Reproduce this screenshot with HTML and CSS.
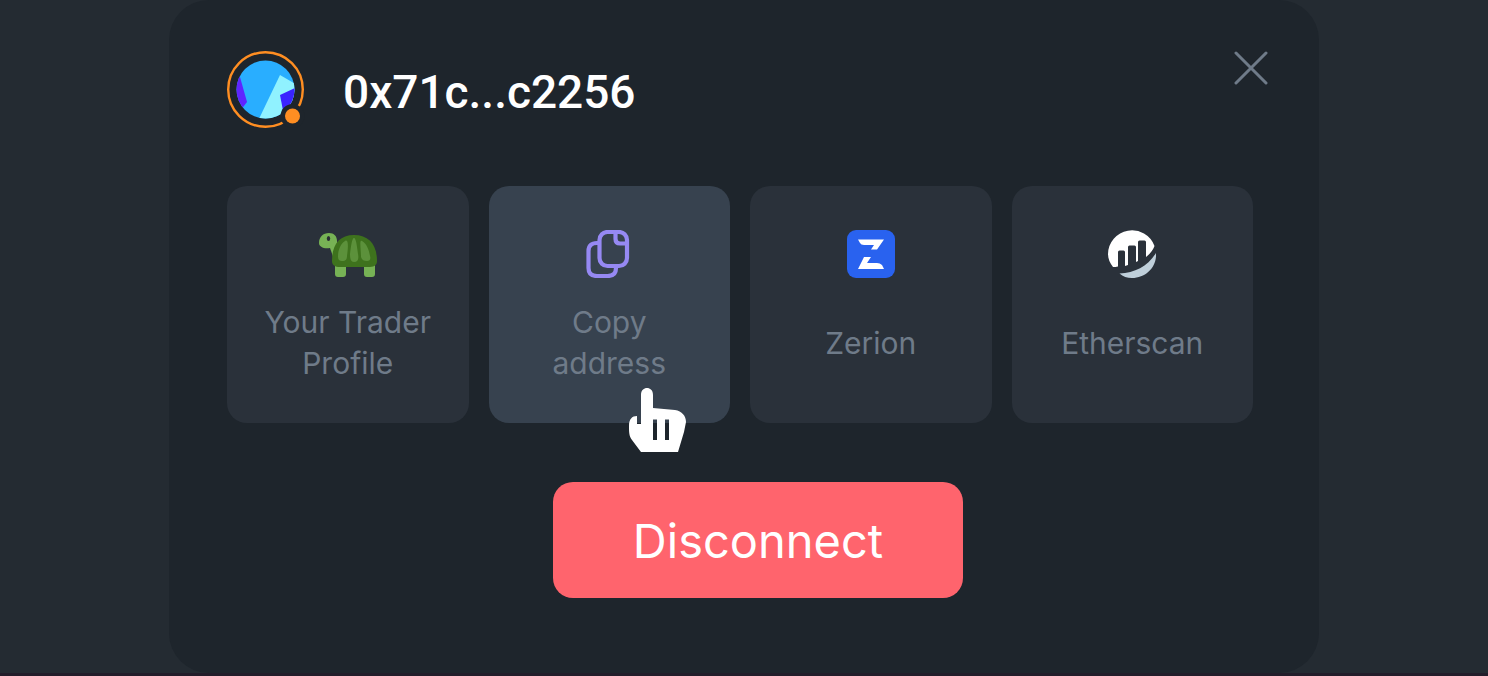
FILE: index.html
```
<!DOCTYPE html>
<html lang="en">
<head>
  <meta charset="UTF-8" />
  <meta name="viewport" content="width=device-width, initial-scale=1" />
  <title>Wallet account</title>
  <link rel="stylesheet" href="styles.css">
</head>
<body>

  <main class="modal" role="dialog" aria-labelledby="address">
    <header class="account">
      <!-- Avatar with status ring -->
      <svg class="avatar" viewBox="0 0 78 78" aria-hidden="true">
        <defs>
          <clipPath id="face"><circle cx="38.5" cy="38.5" r="29" /></clipPath>
        </defs>
        <circle cx="38.5" cy="38.5" r="37.3" fill="none" stroke="#ff8e22" stroke-width="2.4" />
        <g clip-path="url(#face)">
          <rect width="78" height="78" fill="#29aeff" />
          <path d="M8 22 L13 26 L20 51 L13 60 H6 Z" fill="#5f24ff" />
          <path d="M53 24 L72 35 L72 72 H30 Z" fill="#90f2ff" />
          <path d="M53 44 L70 36 V70 H58 Z" fill="#3a24ff" />
        </g>
        <circle cx="65.5" cy="65" r="12" fill="#1e252c" />
        <circle cx="65.5" cy="65" r="7.5" fill="#ff8e22" />
      </svg>
      <h1 class="address" id="address">0x71c...c2256</h1>
      <button class="close" type="button" aria-label="Close">
        <svg viewBox="0 0 34 34" aria-hidden="true">
          <path d="M2 2 L32 32 M32 2 L2 32" stroke="#6f7b89" stroke-width="3" stroke-linecap="round" />
        </svg>
      </button>
    </header>

    <ul class="actions">
      <li class="action">
        <a class="tile" href="#profile">
          <svg class="icon icon-wide" viewBox="0 0 60 48" aria-hidden="true">
            <path d="M1 13 C1 7 5 3 11 3 C16 3 19 6 19 11 C19 17 24 20 24 26 L15 27 C14 23 13 21 12 18 C6 19 1 17 1 13 Z" fill="#77b255" />
            <path d="M17 34 H28 V44 Q28 47 25 47 H20 Q17 47 17 44 Z M46 34 H57 V44 Q57 47 54 47 H49 Q46 47 46 44 Z" fill="#77b255" />
            <path d="M14 31 C14 15 21 5 36 5 C51 5 59 15 59 31 C59 36 55 37 50 37 H22 C17 37 14 35 14 31 Z" fill="#3e721d" />
            <path d="M27 11 C22 14 20 21 20 27 C20 30 22 31 24 31 C28 31 29 29 29 26 C30 19 31 8 27 11 Z M36 8 C34 8 33 16 32 24 C32 29 33 32 36 32 C40 32 41 29 40 24 C39 16 38 8 36 8 Z M44 11 C41 9 43 19 43 27 C44 30 46 31 49 31 C52 31 53 29 52 26 C51 20 49 14 44 11 Z" fill="#5c913b" />
            <ellipse cx="10.5" cy="8.5" rx="1.7" ry="2.5" fill="#292f33" />
          </svg>
          <span class="label">Your Trader<br>Profile</span>
        </a>
      </li>
      <li class="action">
        <button class="tile is-hovered" type="button">
          <svg class="icon" viewBox="0 0 48 48" fill="none" stroke="#9689f3" stroke-width="4.2" aria-hidden="true">
            <rect x="14.5" y="2" width="27.5" height="34" rx="8" />
            <path d="M30.5 2 V9 Q30.5 13.5 35 13.5 H42" />
            <path d="M14.5 13 H12 Q3.5 13 3.5 21 V38 Q3.5 46 12 46 H22.500 Q31 46 31 38 V36" />
          </svg>
          <span class="label">Copy<br>address</span>
        </button>
        <!-- Pointer resting on the hovered tile -->
        <svg class="pointer" viewBox="0 0 57 64" aria-hidden="true">
          <path d="M12 36 V7 C12 2 15 0 18 0 C21 0 24 2 24 7 V20 L46 22 C53 23 57 28 57 34 L55 44 L49 64 H12 L3 52 C0 48 0 44 0 38 C0 31 3 28 8 28 V36 Z M24 31.5 V52 H28 V31.5 Z M36 31.5 V52 H40 V31.5 Z" fill="#fff" fill-rule="evenodd" />
        </svg>
      </li>
      <li class="action">
        <a class="tile" href="#zerion">
          <svg class="icon" viewBox="0 0 48 48" aria-hidden="true">
            <rect width="48" height="48" rx="9" fill="#2962ef" />
            <path d="M11 9.5 H37 L30 19.5 H24 L27 15 H17 Q14 15 13 13 Z M17 27 H24 L20 33 H30 Q33 33 35 35 L37 39 H11 Z" fill="#fff" />
          </svg>
          <span class="label">Zerion</span>
        </a>
      </li>
      <li class="action">
        <a class="tile" href="#etherscan">
          <svg class="icon" viewBox="0 0 48 48" aria-hidden="true">
            <path d="M5 37 C2 33 0 29 0 24 A24 24 0 0 1 46.5 16 C45 20 42 24 38 27 V12 Q38 10.5 36.5 10.5 H31.5 Q30 10.5 30 12 V31 L28 32 V17 Q28 15.5 26.5 15.5 H21.5 Q20 15.5 20 17 V35 L17 36 V22 Q17 20.5 15.5 20.5 H11.5 Q10 20.5 10 22 V36.5 C8 37 7 37 5 37 Z" fill="#fff" />
            <path d="M48 23 C49 37 38 48 24 48 C19 48 15 46.5 11.5 43.5 C27 43 40 36 48 23 Z" fill="#bfcfda" />
          </svg>
          <span class="label">Etherscan</span>
        </a>
      </li>
    </ul>

    <button class="disconnect" type="button">Disconnect</button>
  </main>

</body>
</html>
```
FILE: styles.css
```
/* ----- Reset & Basic Setup ----- */
* {
  margin: 0;
  padding: 0;
  box-sizing: border-box;
}

body {
  background: #242b32;
  border-bottom: 3px solid #231d2a;
  font-family: Inter, "Liberation Sans", sans-serif;
}

button {
  border: 0;
  background: none;
  font: inherit;
  cursor: pointer;
}

svg {
  display: block;
}

/* ----- Modal ----- */
.modal {
  display: flex;
  flex-direction: column;
  max-width: 1150px;
  margin: 0 auto;
  padding: 51px 30px 75px 58px;
  border-radius: 40px;
  background: #1e252c;
}

/* Account row */
.account {
  display: flex;
  align-items: center;
  gap: 38px;
  margin-bottom: 57px;
}
.avatar {
  width: 78px;
  height: 78px;
  flex: none;
}
.address {
  padding-top: 4px;
  color: #fff;
  font-family: Roboto, "Liberation Sans", sans-serif;
  font-size: 46px;
  font-weight: 500;
  line-height: 56px;
}
.close {
  align-self: flex-start;
  margin-left: auto;
  margin-right: 21px;
}
.close svg {
  width: 34px;
  height: 34px;
}

/* Action tiles */
.actions {
  display: grid;
  grid-template-columns: repeat(4, 1fr);
  gap: 20px;
  margin-right: 36px;
  list-style: none;
}
.action {
  position: relative;
}
.tile {
  display: flex;
  flex-direction: column;
  align-items: center;
  gap: 24px;
  width: 100%;
  height: 100%;
  padding: 44px 16px 39px;
  border-radius: 20px;
  background: #2a313a;
  color: #6f7b89;
  text-decoration: none;
}
.tile:hover,
.tile.is-hovered {
  background: #37424f;
}
.icon {
  width: 48px;
  height: 48px;
}
.icon-wide {
  width: 60px;
}
.label {
  display: flex;
  flex: 1;
  align-items: center;
  min-height: 82px;
  font-size: 30px;
  line-height: 41px;
  text-align: center;
}
.pointer {
  position: absolute;
  top: 202px;
  left: 140px;
  width: 57px;
  height: 64px;
  z-index: 1;
  pointer-events: none;
}

/* Disconnect */
.disconnect {
  align-self: center;
  width: 410px;
  max-width: 100%;
  height: 116px;
  margin-top: 59px;
  border-radius: 20px;
  background: #ff646d;
  color: #fff;
  font-size: 47px;
}

@media (max-width: 900px) {
  .actions {
    grid-template-columns: repeat(2, 1fr);
  }
}
```
